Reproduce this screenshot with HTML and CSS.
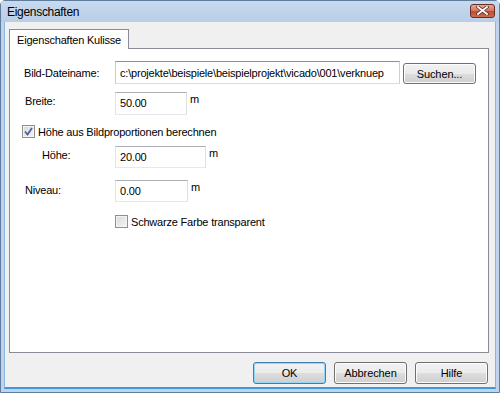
FILE: index.html
```html
<!DOCTYPE html>
<html lang="de">
<head>
    <meta charset="UTF-8">
    <title>Eigenschaften</title>
    <link rel="stylesheet" href="styles.css">
</head>
<body>
    <div class="window">
        <div class="titlebar">
            <span class="title">Eigenschaften</span>
            <div class="close">
                <svg width="13" height="9" viewBox="0 0 13 9">
                    <path d="M2 1 L11 8 M11 1 L2 8" stroke="#5a2a22" stroke-width="3.4" stroke-linecap="square"/>
                    <path d="M2 1 L11 8 M11 1 L2 8" stroke="#fff" stroke-width="1.8" stroke-linecap="square"/>
                </svg>
            </div>
        </div>
        <div class="client">
            <div class="tabs">
                <div class="tab">Eigenschaften Kulisse</div>
            </div>
            <div class="panel">
                <div class="row row-file">
                    <label class="lbl lbl-file">Bild-Dateiname:</label>
                    <div class="field field-file">c:\projekte\beispiele\beispielprojekt\vicado\001\verknuep</div>
                    <button class="btn btn-search">Suchen...</button>
                </div>
                <div class="row row-breite">
                    <label class="lbl lbl-breite">Breite:</label>
                    <div class="field field-breite">50.00</div>
                    <span class="unit">m</span>
                </div>
                <div class="row row-check1">
                    <span class="check checked">
                        <svg width="9" height="9" viewBox="0 0 9 9"><path d="M1 4.5 L3.5 7.5 L8 1" fill="none" stroke="#4d61a0" stroke-width="1.8"/></svg>
                    </span>
                    <span class="check-text">Höhe aus Bildproportionen berechnen</span>
                </div>
                <div class="row row-hoehe">
                    <label class="lbl lbl-hoehe">Höhe:</label>
                    <div class="field field-hoehe">20.00</div>
                    <span class="unit">m</span>
                </div>
                <div class="row row-niveau">
                    <label class="lbl lbl-niveau">Niveau:</label>
                    <div class="field field-niveau">0.00</div>
                    <span class="unit">m</span>
                </div>
                <div class="row row-check2">
                    <span class="check"></span>
                    <span class="check-text">Schwarze Farbe transparent</span>
                </div>
            </div>
            <div class="buttons">
                <button class="btn btn-ok">OK</button>
                <button class="btn">Abbrechen</button>
                <button class="btn">Hilfe</button>
            </div>
        </div>
    </div>
</body>
</html>
```

FILE: styles.css
```css
body {
    margin: 0;
    padding: 0;
    font-family: 'Liberation Sans', Arial, sans-serif;
    font-size: 11px;
    letter-spacing: -0.2px;
    color: #000;
    background: #fff;
}

.window {
    width: 500px;
    height: 393px;
    box-sizing: border-box;
    border: 1px solid #5f7d9c;
    border-radius: 5px 5px 0 0;
    background: #bfd4ec;
    display: flex;
    flex-direction: column;
    padding: 0 3px 3px 3px;
}

.titlebar {
    height: 21px;
    display: flex;
    align-items: center;
    justify-content: space-between;
    background: linear-gradient(#c8daef, #b8cde7);
    margin: 0 -3px;
    padding-left: 6px;
    padding-right: 4px;
}

.title {
    font-size: 12px;
    letter-spacing: -0.3px;
    padding-top: 1px;
}

.close {
    width: 25px;
    height: 14px;
    margin-top: -2px;
    box-sizing: border-box;
    border: 1px solid #6a2d25;
    border-radius: 3px;
    background: linear-gradient(#e6a796, #d3735f 50%, #c04a33 51%, #cf6b4e);
    display: flex;
    align-items: center;
    justify-content: center;
}

.client {
    flex: 1;
    background: #f0f0f0;
    border-left: 1px solid #8bb5dc;
    border-bottom: 2px solid #3f9ad8;
    border-right: 1px solid #8bb5dc;
    padding: 7px 6px 0 4px;
    display: flex;
    flex-direction: column;
}

.tabs {
    display: flex;
    height: 20px;
}

.tab {
    padding: 0 7px;
    height: 20px;
    line-height: 20px;
    box-sizing: border-box;
    border: 1px solid #898c95;
    border-bottom: none;
    background: #fff;
    position: relative;
    z-index: 1;
    white-space: nowrap;
}

.panel {
    height: 305px;
    box-sizing: border-box;
    border: 1px solid #898c95;
    margin-top: -1px;
    background: #fff;
    padding-left: 14px;
}

.row {
    display: flex;
    align-items: flex-start;
}

.lbl {
    width: 91px;
    flex-shrink: 0;
}

.field {
    height: 23px;
    box-sizing: border-box;
    border: 1px solid #abadb3;
    border-color: #abadb3 #dbdfe6 #e3e9ef #e2e3ea;
    padding: 4px 0 0 4px;
    white-space: nowrap;
    overflow: hidden;
    flex-shrink: 0;
}

.unit {
    margin-left: 3px;
    margin-top: 1px;
}

.row-file {
    margin-top: 12px;
}

.lbl-file {
    padding-top: 6px;
}

.field-file {
    width: 285px;
    padding-top: 5px;
    border-color: #5f9ad6 #b7d5f1 #c7e2f1 #b5cfe7;
}

.btn {
    font-family: 'Liberation Sans', Arial, sans-serif;
    font-size: 11px;
    letter-spacing: -0.1px;
    height: 22px;
    width: 73px;
    border: 1px solid #707070;
    border-radius: 3px;
    background: linear-gradient(#f2f2f2, #ebebeb 50%, #dddddd 51%, #cfcfcf);
    box-shadow: inset 0 0 0 1px #fcfcfc;
    padding: 0;
    color: #000;
    flex-shrink: 0;
}

.btn-search {
    margin-left: 3px;
    margin-top: 2px;
    height: 21px;
}

.row-breite {
    margin-top: 8px;
}

.lbl-breite {
    padding-left: 1px;
    width: 90px;
    padding-top: 3px;
}

.field-breite {
    width: 72px;
}

.row-check1 {
    margin-top: 10px;
    align-items: center;
}

.check {
    width: 13px;
    height: 13px;
    box-sizing: border-box;
    border: 1px solid #8f8f8f;
    background: linear-gradient(135deg, #d9d9d9, #f5f5f5);
    box-shadow: inset 0 0 0 1px #f4f4f4;
    display: flex;
    align-items: center;
    justify-content: center;
    margin-left: -2px;
}

.check-text {
    margin-left: 3px;
}

.row-hoehe {
    margin-top: 8px;
}

.lbl-hoehe {
    padding-left: 18px;
    width: 73px;
    padding-top: 3px;
}

.field-hoehe {
    width: 91px;
    height: 22px;
}

.row-niveau {
    margin-top: 12px;
}

.lbl-niveau {
    padding-left: 1px;
    width: 90px;
    padding-top: 4px;
}

.field-niveau {
    width: 73px;
    height: 22px;
}

.row-check2 {
    margin-top: 13px;
    padding-left: 93px;
    align-items: center;
}

.buttons {
    display: flex;
    justify-content: flex-end;
    gap: 8px;
    margin-top: 9px;
    padding-right: 1px;
}

.btn-ok {
    border-color: #3c7fb1;
    box-shadow: inset 0 0 0 1px #97d4f6;
}
```
